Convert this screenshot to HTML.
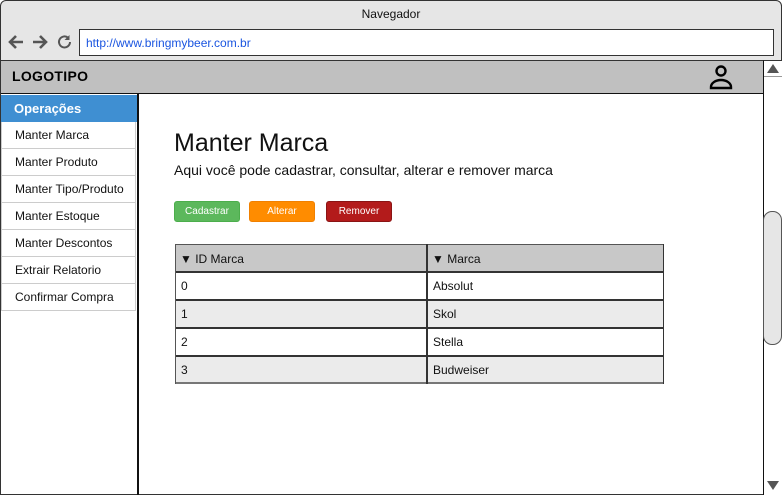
<!DOCTYPE html>
<html><head><meta charset="utf-8"><style>
*{box-sizing:border-box;margin:0;padding:0}
body{width:782px;height:495px;background:#fff;font-family:"Liberation Sans",Arial,sans-serif;position:relative;overflow:hidden}
.a{position:absolute}
.c{position:absolute;font-size:12px;color:#111}
</style></head><body>
<div class="a" style="left:0;top:0;width:782px;height:495px;border:1px solid #333;border-radius:6px 6px 0 0;background:#e6e6e6"></div>
<div class="a" style="left:0;top:7px;width:782px;text-align:center;font-size:12px;color:#111">Navegador</div>
<svg class="a" style="left:8px;top:33px" width="66" height="18" viewBox="0 0 66 18">
<path d="M15 9H3M8 3L2 9l6 6" stroke="#555" stroke-width="2.6" fill="none"/>
<path d="M25 9h12M32 3l6 6-6 6" stroke="#555" stroke-width="2.6" fill="none"/>
<path d="M62 9a5.5 5.5 0 1 1-2-4.3" stroke="#555" stroke-width="2" fill="none"/><path d="M61.5 2v5h-5z" fill="#555"/>
</svg>
<div class="a" style="left:79px;top:29px;width:695px;height:27px;border:1px solid #333;background:#fff;font-size:12px;color:#1a55e0;padding:6px 0 0 6px">http://www.bringmybeer.com.br</div>
<div class="a" style="left:1px;top:60px;width:762px;height:34px;background:#c0c0c0;border-top:1px solid #333;border-bottom:1px solid #111"></div>
<div class="a" style="left:12px;top:68px;font-size:14px;font-weight:bold;letter-spacing:.3px">LOGOTIPO</div>
<svg class="a" style="left:706px;top:62px" width="30" height="30" viewBox="0 0 30 30"><circle cx="15" cy="9" r="4.5" stroke="#000" stroke-width="2.4" fill="none"/><path d="M5 26v-1a10 7 0 0 1 20 0v1z" stroke="#000" stroke-width="2.4" fill="none"/></svg>
<div class="a" style="left:763px;top:60px;width:19px;height:435px;background:#fff;border-left:1px solid #111;border-top:1px solid #333"></div>
<div class="a" style="left:767px;top:64px;width:0;height:0;border-left:6px solid transparent;border-right:6px solid transparent;border-bottom:9px solid #555"></div>
<div class="a" style="left:764px;top:76px;width:18px;height:1px;background:#999"></div>
<div class="a" style="left:763px;top:211px;width:19px;height:134px;background:#e6e6e6;border:1px solid #555;border-radius:9px"></div>
<div class="a" style="left:767px;top:481px;width:0;height:0;border-left:6px solid transparent;border-right:6px solid transparent;border-top:9px solid #555"></div>
<div class="a" style="left:1px;top:94px;width:762px;height:400px;background:#fff"></div>
<div class="a" style="left:137px;top:94px;width:2px;height:401px;background:#111"></div>
<div class="a" style="left:1px;top:95px;width:136px;height:27px;background:#3f8fd2;color:#fff;font-weight:bold;font-size:13px;padding:6px 0 0 13px">Operações</div>
<div class="a" style="left:1px;top:122px;width:135px;font-size:12px;color:#111">
<div style="height:27px;border:1px solid #ccc;border-top:0;padding:6px 0 0 13px">Manter Marca</div>
<div style="height:27px;border:1px solid #ccc;border-top:0;padding:6px 0 0 13px">Manter Produto</div>
<div style="height:27px;border:1px solid #ccc;border-top:0;padding:6px 0 0 13px">Manter Tipo/Produto</div>
<div style="height:27px;border:1px solid #ccc;border-top:0;padding:6px 0 0 13px">Manter Estoque</div>
<div style="height:27px;border:1px solid #ccc;border-top:0;padding:6px 0 0 13px">Manter Descontos</div>
<div style="height:27px;border:1px solid #ccc;border-top:0;padding:6px 0 0 13px">Extrair Relatorio</div>
<div style="height:27px;border:1px solid #ccc;border-top:0;padding:6px 0 0 13px">Confirmar Compra</div>
</div>
<div class="a" style="left:174px;top:129px;font-size:25px;color:#111">Manter Marca</div>
<div class="a" style="left:174px;top:162px;font-size:14px;color:#111">Aqui você pode cadastrar, consultar, alterar e remover marca</div>
<div class="a" style="left:174px;top:201px;width:66px;height:21px;background:#5cb85c;border:1px solid #4cae4c;border-radius:3px;color:#fff;font-size:10px;text-align:center;line-height:19px">Cadastrar</div>
<div class="a" style="left:249px;top:201px;width:66px;height:21px;background:#ff8c00;border:1px solid #f08000;border-radius:3px;color:#fff;font-size:10px;text-align:center;line-height:19px">Alterar</div>
<div class="a" style="left:326px;top:201px;width:66px;height:21px;background:#b31b1b;border:1px solid #8a1414;border-radius:3px;color:#fff;font-size:10px;text-align:center;line-height:19px">Remover</div>

<div class="a" style="left:175px;top:245px;width:489px;height:26px;background:#c8c8c8"></div>
<div class="a" style="left:175px;top:299px;width:489px;height:28px;background:#ebebeb"></div>
<div class="a" style="left:175px;top:355px;width:489px;height:28px;background:#ebebeb"></div>
<div class="a" style="left:175px;top:244px;width:489px;height:1px;background:#555"></div>
<div class="a" style="left:175px;top:271px;width:489px;height:2px;background:#333"></div>
<div class="a" style="left:175px;top:299px;width:489px;height:2px;background:#333"></div>
<div class="a" style="left:175px;top:327px;width:489px;height:2px;background:#333"></div>
<div class="a" style="left:175px;top:355px;width:489px;height:2px;background:#333"></div>
<div class="a" style="left:175px;top:382px;width:489px;height:2px;background:#777"></div>
<div class="a" style="left:175px;top:244px;width:1px;height:140px;background:#555"></div>
<div class="a" style="left:663px;top:244px;width:1px;height:140px;background:#333"></div>
<div class="a" style="left:426px;top:244px;width:2px;height:140px;background:#333"></div>
<div class="c" style="left:180px;top:252px">▼ ID Marca</div><div class="c" style="left:432px;top:252px">▼ Marca</div>
<div class="c" style="left:181px;top:279px">0</div><div class="c" style="left:433px;top:279px">Absolut</div>
<div class="c" style="left:181px;top:307px">1</div><div class="c" style="left:433px;top:307px">Skol</div>
<div class="c" style="left:181px;top:335px">2</div><div class="c" style="left:433px;top:335px">Stella</div>
<div class="c" style="left:181px;top:363px">3</div><div class="c" style="left:433px;top:363px">Budweiser</div>
</body></html>
